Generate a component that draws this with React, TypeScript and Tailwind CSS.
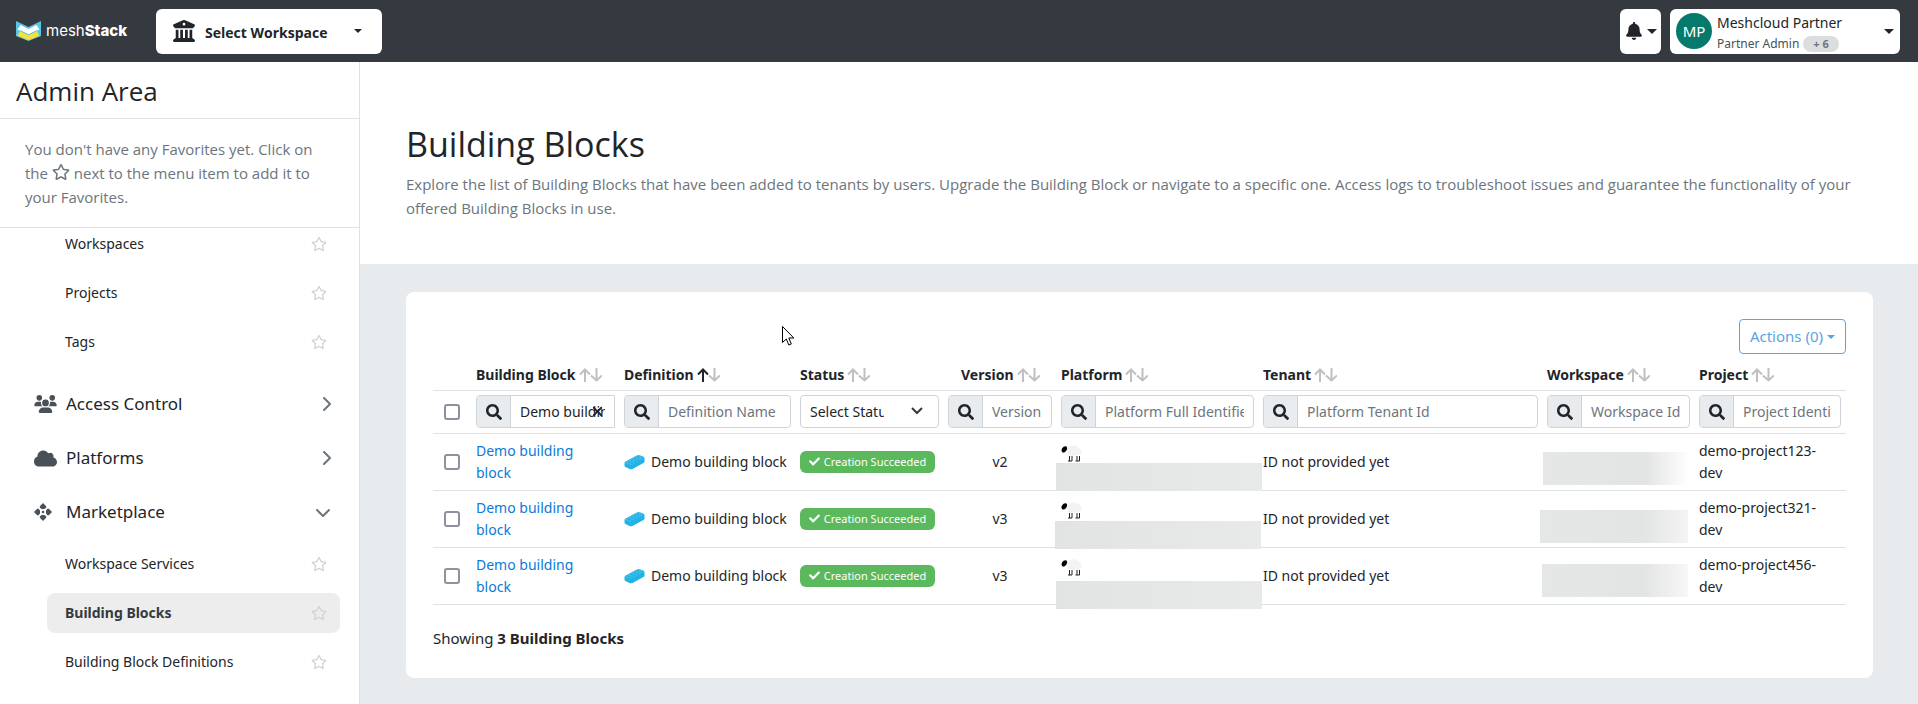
import {ReactNode} from "react";
import clsx from "clsx";
import {FaCheck, FaCloud, FaRegStar, FaSearch} from "react-icons/fa";
import {FaBell, FaBuildingColumns, FaChevronDown, FaChevronRight, FaXmark} from "react-icons/fa6";

type Column = {
  name: string;
  placeholder?: string;
  value?: string;
  sorted?: boolean;
  cell: string;
};

const columns: Column[] = [
  {name: "Building Block", placeholder: "Name", value: "Demo building block", cell: "w-[148px]"},
  {name: "Definition", placeholder: "Definition Name", sorted: true, cell: "w-[176px]"},
  {name: "Status", cell: "w-[148px]"},
  {name: "Version", placeholder: "Version", cell: "w-[113px]"},
  {name: "Platform", placeholder: "Platform Full Identifier", cell: "w-[202px]"},
  {name: "Tenant", placeholder: "Platform Tenant Id", cell: ""},
  {name: "Workspace", placeholder: "Workspace Id", cell: "w-[152px]"},
  {name: "Project", placeholder: "Project Identifier", cell: "w-[147px]"},
];

const rows = [
  {version: "v2", project: "demo-project123-dev", platformMask: "top-[29px] -left-[5px]", workspaceMask: "-left-[4px] top-[18px] w-[146px] to-white"},
  {version: "v3", project: "demo-project321-dev", platformMask: "top-[30px] -left-[6px]", workspaceMask: "-left-[7px] top-[19px] w-[148px] to-[#f4f4f4]"},
  {version: "v3", project: "demo-project456-dev", platformMask: "top-[33px] -left-[5px]", workspaceMask: "-left-[5px] top-[16px] w-[146px] to-[#f7f7f7]"},
];

const Caret = ({wide}: {wide?: boolean}) => (
  <svg width={wide ? 10 : 8} height={wide ? 5 : 4} viewBox="0 0 8 4" fill="currentColor">
    <path d="M0 0h8L4 4z" />
  </svg>
);

const Logo = () => (
  <svg width="25" height="20" viewBox="0 0 25 20">
    <path d="M0 0l12.500 6L25 0v15l-12.500 5L0 15z" fill="#5bc3e3" />
    <path d="M1.500 8.500l3-4.500 8 4 8-4 3 4.500-11 5z" fill="#fff" />
    <path d="M1.500 14.800l2.500-5 8.500 4 8.500-4 2.500 5-11 4.400z" fill="#f4e23a" />
    <path d="M4 9.600l8.500 4.200L21 9.600" fill="none" stroke="#5bc3e3" />
  </svg>
);

const UsersIcon = () => (
  <svg width="23" height="18" viewBox="0 0 640 512" fill="currentColor">
    <path d="M144 0a80 80 0 1 1 0 160A80 80 0 1 1 144 0zM512 0a80 80 0 1 1 0 160A80 80 0 1 1 512 0zM0 298.700C0 239.800 47.800 192 106.700 192h42.700c15.900 0 31 3.500 44.600 9.700-1.300 7.200-1.900 14.700-1.900 22.300 0 38.200 16.800 72.500 43.300 96H21.300C9.600 320 0 310.400 0 298.700zM405.300 320h-.7c26.600-23.500 43.300-57.800 43.300-96 0-7.600-.7-15-1.900-22.300 13.600-6.300 28.700-9.700 44.600-9.700h42.700C592.200 192 640 239.800 640 298.700c0 11.800-9.600 21.300-21.300 21.300H405.300zM224 224a96 96 0 1 1 192 0 96 96 0 1 1-192 0zM128 485.300C128 411.700 187.700 352 261.300 352h117.400C452.300 352 512 411.700 512 485.300c0 14.700-11.900 26.700-26.700 26.700H154.700c-14.700 0-26.700-11.900-26.700-26.700z" />
  </svg>
);

const MarketplaceIcon = () => (
  <svg width="18" height="18" viewBox="0 0 18 18" fill="currentColor">
    <path d="M9 0l3.200 3.200v1.300L10.500 6H7.500L5.800 4.500V3.200zM9 18l-3.200-3.200v-1.300L7.500 12h3l1.700 1.500v1.300zM0 9l3.200-3.200h1.300L6 7.500v3l-1.500 1.700H3.200zM18 9l-3.200 3.200h-1.300L12 10.500v-3l1.500-1.700h1.300z" />
    <circle cx="9" cy="9" r="1.300" />
  </svg>
);

const SortIcon = ({up}: {up?: boolean}) => (
  <svg width="23" height="14" viewBox="0 0 23 14" fill="none" stroke="#c0c0c0" strokeWidth="2">
    <path d="M12 7.500l5.500 5L23 7.500M17.500 13V0" />
    <path d="M1 6.500L6 1.500l5 5M6 1.500V14" stroke={up ? "#212529" : "#c0c0c0"} />
  </svg>
);

const BrickIcon = () => (
  <svg width="21" height="16" viewBox="0 0 21 16">
    <path d="M1 8l11-6q2-1 4-.500l3 1q1.500.500 1.500 2v3q0 1-1 1.500l-11 6q-1.500.700-3 0L1.500 13Q.500 12.500.500 11.500V9z" fill="#22b2e5" />
    <path d="M1 8l11-6q2-1 4-.500l3 1q1.500.700 0 1.700L8.500 10.500q-1.500.800-3 .3L1 9.300z" fill="#35bdec" />
    <path d="M4 8l2 .7M7 6.300l2 .7M10 4.700l2 .7M13 3l2 .7M7 9l2 .6M10 7.300l2 .6M13 5.700l2 .6" stroke="#1fa9dd" />
  </svg>
);

const SheepIcon = () => (
  <svg width="21" height="18" viewBox="0 0 21 18">
    <path d="M6 8q0-5 4-6 4-2 7 1 4 2 3.500 6-2 3-6 2.500-5 1-8-1z" fill="#f3f3f3" />
    <path d="M1 4.500q2-3 4.500-2 1.500 2-.500 4.500-2 2.500-4 1-1-2 0-3.500z" fill="#000" />
    <path d="M8.500 12v5M11 12v5M16 12v5M18.500 12v5M7 17h4M14.500 17h4" stroke="#222" />
  </svg>
);

const SubItem = ({label, active}: {label: string; active?: boolean}) => (
  <li className="flex h-[49px] items-center pr-[19px] pl-[47px]">
    <div className={clsx("flex h-10 flex-1 items-center rounded-lg pr-[13px] pl-[18px]", active && "bg-[#ededed]")}>
      <a href="#" className={clsx("flex-1 text-sm", active && "font-bold text-[#343a40]")}>
        {label}
      </a>
      <button aria-label={"Add " + label + " to favorites"} className="text-[#ced4da]">
        <FaRegStar size={16} />
      </button>
    </div>
  </li>
);

const Section = ({icon, label, open}: {icon: ReactNode; label: string; open?: boolean}) => (
  <li className="flex h-[54px] items-center pr-7 pl-[34px]">
    <button className="flex flex-1 items-center text-[17px]">
      <span className="w-8 text-[#495057]">{icon}</span>
      <span className="flex-1 text-left">{label}</span>
      <span className="text-[#6c757d]">{open ? <FaChevronDown className="size-4" /> : <FaChevronRight className="h-[18px] w-[10px]" />}</span>
    </button>
  </li>
);

const Filter = ({column}: {column: Column}) => {
  if (!column.placeholder) {
    return (
      <div className="relative mr-[9px]">
        <select aria-label="Status" className="h-[33px] w-full appearance-none rounded border border-[#ced4da] bg-white pr-[54px] pl-[9px]">
          <option>Select Status</option>
        </select>
        <svg width="12" height="8" viewBox="0 0 12 8" fill="none" stroke="#343a40" strokeWidth="2" className="pointer-events-none absolute top-3 right-4">
          <path d="M1 1l5 5 5-5" />
        </svg>
      </div>
    );
  }
  return (
    <div
      className={clsx(
        "relative flex h-[33px] overflow-hidden border border-[#ced4da]",
        column.value ? "rounded-l" : "rounded",
        column.name === "Project" ? "mr-[5px]" : "mr-[9px]"
      )}
    >
      <span className="flex w-[34px] shrink-0 items-center justify-center border-r border-[#ced4da] bg-[#e9ecef]">
        <FaSearch size={16} />
      </span>
      <input aria-label={column.name} placeholder={column.placeholder} defaultValue={column.value} className="w-full min-w-0 px-[9px] placeholder:text-[#6c757d]" />
      {column.value && (
        <button aria-label="Clear" className="absolute top-2 right-[9px]">
          <FaXmark size={15} />
        </button>
      )}
    </div>
  );
};

const App = () => {
  return (
    <div className="flex h-screen flex-col overflow-hidden bg-white font-['Open_Sans','Noto_Sans',sans-serif] text-[15px] text-[#212529]">
      <header className="flex h-[62px] shrink-0 items-center bg-[#343a40] pr-[18px] pl-4">
        <a href="#" className="flex w-[113px] items-center gap-[5px] font-['Inter',sans-serif] text-[15px] text-white">
          <Logo />
          <span>
            mesh<b className="font-extrabold">Stack</b>
          </span>
        </a>
        <button className="ml-[27px] flex h-[45px] w-[226px] items-center rounded-md bg-white pr-5 pl-[17px] text-sm font-bold">
          <FaBuildingColumns size={22} />
          <span className="ml-[10px] flex-1 pt-[3px] text-left">Select Workspace</span>
          <Caret />
        </button>
        <button aria-label="Notifications" className="ml-auto flex h-[45px] w-[41px] items-center justify-center gap-1 rounded-md bg-white">
          <FaBell size={18} />
          <Caret wide />
        </button>
        <button className="ml-[9px] flex h-[45px] w-[230px] items-center rounded-md bg-white px-1.5 text-left font-['Noto_Sans',sans-serif]">
          <span className="flex size-9 items-center justify-center rounded-full bg-[#05796b] text-[15px] text-white">MP</span>
          <span className="ml-[5px] flex-1 pt-0.5">
            <span className="block text-sm leading-6">Meshcloud Partner</span>
            <span className="flex items-center gap-1 text-xs leading-[18px] text-[#495057]">
              Partner Admin
              <span className="rounded-full bg-[#dcdddf] px-[10px] text-[11px] leading-4 font-bold text-[#6c757d]">+ 6</span>
            </span>
          </span>
          <Caret wide />
        </button>
      </header>

      <div className="flex min-h-0 flex-1">
        <aside className="flex w-[360px] shrink-0 flex-col overflow-hidden border-r border-[#dee2e6]">
          <h2 className="h-[57px] shrink-0 border-b border-[#dee2e6] pt-[11px] pl-4 text-[26px] leading-9">Admin Area</h2>
          <p className="h-[109px] shrink-0 border-b border-[#dee2e6] pt-[18px] pr-6 pl-[25px] leading-6 text-[#6c757d]">
            You don't have any Favorites yet. Click on the <FaRegStar size={18} className="inline align-[-2px]" /> next to the menu item to add it to your Favorites.
          </p>
          <nav className="min-h-0 flex-1 overflow-hidden font-['Noto_Sans',sans-serif]">
            <ul className="-mt-[9px]">
              <SubItem label="Workspaces" />
              <SubItem label="Projects" />
              <SubItem label="Tags" />
            </ul>
            <ul className="mt-[11px]">
              <Section icon={<UsersIcon />} label="Access Control" />
              <Section icon={<FaCloud size={23} />} label="Platforms" />
              <Section icon={<MarketplaceIcon />} label="Marketplace" open />
              <SubItem label="Workspace Services" />
              <SubItem label="Building Blocks" active />
              <SubItem label="Building Block Definitions" />
              <SubItem label="" />
            </ul>
          </nav>
        </aside>

        <main className="flex min-w-0 flex-1 flex-col">
          <div className="h-[202px] shrink-0 px-[46px] pt-[58px]">
            <h1 className="text-[34px] leading-[48px]">Building Blocks</h1>
            <p className="mt-1 leading-6 text-[#6c757d]">
              Explore the list of Building Blocks that have been added to tenants by users. Upgrade the Building Block or navigate to a specific one. Access logs to troubleshoot issues and guarantee the functionality of your offered Building Blocks in use.
            </p>
          </div>
          <div className="flex-1 bg-[#e7ebee] pt-7 pr-[45px] pl-[46px] font-['Noto_Sans',sans-serif]">
            <div className="rounded-lg bg-white px-[27px] pt-[27px] pb-7">
              <div className="flex justify-end">
                <button className="flex h-[35px] items-center gap-1 rounded border border-[#5ba4e5] px-[10px] text-[#5ba4e5]">
                  Actions (0)
                  <Caret />
                </button>
              </div>
              <table className="mt-1.5 w-full table-fixed border-collapse text-sm">
                <thead>
                  <tr className="h-[30px] border-b border-[#dee2e6] text-left">
                    <th className="w-[43px]"></th>
                    {columns.map((column) => (
                      <th key={column.name} className={column.cell}>
                        <button className={clsx("flex items-center gap-[3px] whitespace-nowrap", column.name === "Version" && "ml-[13px]")}>
                          {column.name}
                          <SortIcon up={column.sorted} />
                        </button>
                      </th>
                    ))}
                  </tr>
                  <tr className="h-[43px] border-b border-[#dee2e6]">
                    <td className="pl-[11px]">
                      <input type="checkbox" aria-label="Select all" className="block size-4 appearance-none rounded-[3px] border-2 border-[#8f8f9d]" />
                    </td>
                    {columns.map((column) => (
                      <td key={column.name}>
                        <Filter column={column} />
                      </td>
                    ))}
                  </tr>
                </thead>
                <tbody>
                  {rows.map((row) => (
                    <tr key={row.project} className="h-[57px] border-b border-[#dee2e6] leading-[22px]">
                      <td className="pl-[11px]">
                        <input type="checkbox" aria-label={"Select " + row.project} className="block size-4 appearance-none rounded-[3px] border-2 border-[#8f8f9d]" />
                      </td>
                      <td className="pr-10">
                        <a href="#" className="text-[#0b7ad9]">
                          Demo building block
                        </a>
                      </td>
                      <td>
                        <span className="flex items-center gap-1.5 whitespace-nowrap">
                          <BrickIcon />
                          Demo building block
                        </span>
                      </td>
                      <td>
                        <span className="flex h-[22px] w-[135px] items-center justify-center gap-1 rounded-md bg-[#5cb85c] text-[11px] whitespace-nowrap text-white">
                          <FaCheck size={11} />
                          Creation Succeeded
                        </span>
                      </td>
                      <td className="pr-[9px] text-center">{row.version}</td>
                      <td className="relative align-top">
                        <div className="pt-[10px]">
                          <SheepIcon />
                        </div>
                        <div className={clsx("absolute h-7 w-[206px] bg-linear-to-r from-[#e2e3e3] to-[#e8e9e9]", row.platformMask)}></div>
                      </td>
                      <td>ID not provided yet</td>
                      <td className="relative">
                        <div className={clsx("absolute h-[33px] bg-linear-to-r from-[#e5e6e6] via-[#e3e4e4] via-70%", row.workspaceMask)}></div>
                      </td>
                      <td className="pr-[18px]">{row.project}</td>
                    </tr>
                  ))}
                </tbody>
              </table>
              <p className="mt-[21px] leading-6">
                Showing <b>3 Building Blocks</b>
              </p>
            </div>
          </div>
        </main>
      </div>

      {/* mouse pointer */}
      <svg width="13" height="20" viewBox="0 0 13 20" className="pointer-events-none absolute top-[326px] left-[782px]">
        <path d="M.5.500v16l3.800-3.500 2.500 6 2.500-1-2.500-6h5z" fill="#fff" stroke="#000" />
      </svg>
    </div>
  );
};

export default App;
